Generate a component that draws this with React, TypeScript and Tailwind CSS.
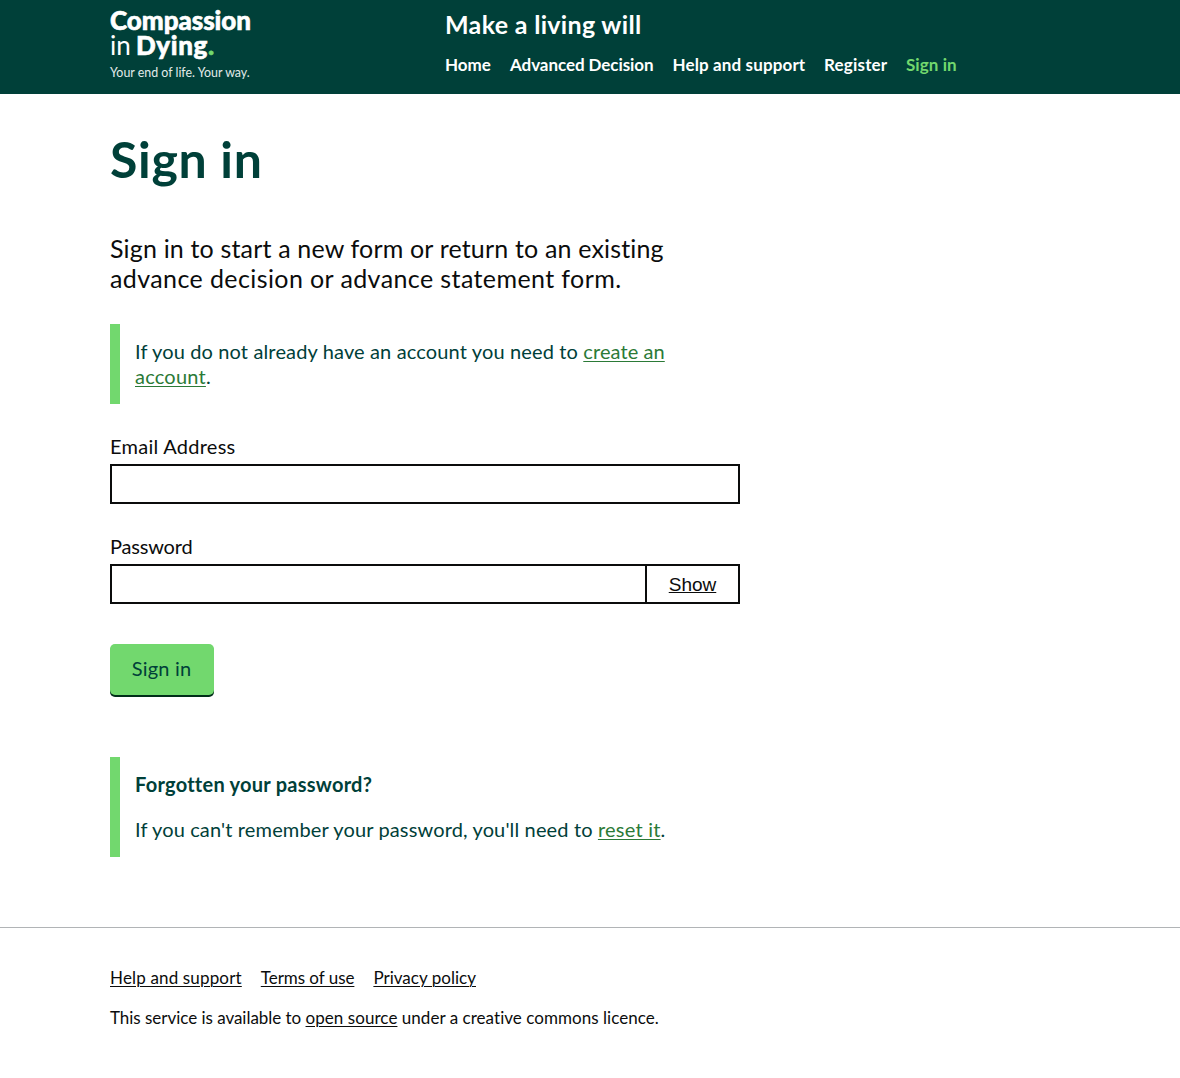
import type { ReactNode } from "react";

const navItems = [
  { label: "Home", style: "w-[65px] text-white" },
  { label: "Advanced Decision", style: "w-[162.5px] tracking-[-0.07px] text-white" },
  { label: "Help and support", style: "w-[151.5px] tracking-[0.13px] text-white" },
  { label: "Register", style: "w-[82px] tracking-[0.19px] text-white" },
  { label: "Sign in", style: "tracking-[0.08px] text-[#72d86e]" },
];

function Link({ className, children }: { className: string; children: ReactNode }) {
  return (
    <a href="#" className={`underline decoration-1 underline-offset-2 ${className}`}>
      {children}
    </a>
  );
}

function Logo() {
  return (
    <a href="#" className="block w-[335px] pt-[7px] text-white">
      <div className="h-[25px] text-[26px] leading-[26px] font-black tracking-[-0.05px] [-webkit-text-stroke:0.6px_white]">
        Compassion
      </div>
      <div className="flex h-[25px] text-[26px] leading-[26px]">
        <span className="w-[26px] font-normal">in</span>
        <span className="font-black tracking-[0.65px] [-webkit-text-stroke:0.6px]">
          Dying<span className="text-[#72d86e]">.</span>
        </span>
      </div>
      <div className="pt-[8px] text-[12.4px] leading-[16px] text-[#e3ebea]">Your end of life. Your way.</div>
    </a>
  );
}

function Header() {
  return (
    <header className="h-[94px] bg-[#004039]">
      <div className="mx-[110px] flex">
        <Logo />
        <div className="pt-[9px] text-white">
          <div className="text-[25px] leading-[30px] font-bold tracking-[0.32px]">Make a living will</div>
          <nav className="mt-[13px] flex text-[17px] leading-[25px] font-bold">
            {navItems.map((item) => (
              <a key={item.label} href="#" className={`whitespace-nowrap ${item.style}`}>
                {item.label}
              </a>
            ))}
          </nav>
        </div>
      </div>
    </header>
  );
}

function Inset({ className, children }: { className: string; children: ReactNode }) {
  return (
    <div className={`border-l-[10px] border-[#72d86e] p-[15px] whitespace-nowrap text-[#004039] ${className}`}>
      {children}
    </div>
  );
}

export default function App() {
  return (
    <div className="min-h-[1078px] bg-white font-['Lato',sans-serif] text-[20px] leading-[25px] text-[#0b0c0c]">
      <Header />
      <main className="ml-[110px] w-[630px] pt-[40px]">
        <h1 className="text-[50px] leading-[50px] font-bold tracking-[0.7px] text-[#004039]">Sign in</h1>
        <p className="mt-[49px] text-[25px] leading-[30px] whitespace-nowrap">
          <span className="block tracking-[0.17px]">Sign in to start a new form or return to an existing</span>
          <span className="block tracking-[0.4px]">advance decision or advance statement form.</span>
        </p>
        <Inset className="mt-[31px] h-[80px]">
          <span className="tracking-[0.14px]">If you do not already have an account you need to </span>
          <Link className="tracking-[0.09px] text-[#2b7a37]">create an</Link>
          <br />
          <Link className="tracking-[0.22px] text-[#2b7a37]">account</Link>.
        </Inset>
        <form>
          <label className="mt-[30px] block tracking-[0.26px]" htmlFor="email">
            Email Address
          </label>
          <input id="email" className="mt-[5px] block h-[40px] w-full border-2 border-[#0b0c0c] px-[5px] outline-none" />
          <label className="mt-[30px] block tracking-[-0.19px]" htmlFor="password">
            Password
          </label>
          <div className="mt-[5px] flex">
            <input
              id="password"
              type="password"
              className="block h-[40px] w-[537px] border-2 border-[#0b0c0c] px-[5px] outline-none"
            />
            <button
              type="button"
              className="h-[40px] flex-1 border-2 border-l-0 border-[#0b0c0c] font-['Liberation_Sans',sans-serif] text-[19px] leading-[25px] underline decoration-1 underline-offset-1"
            >
              Show
            </button>
          </div>
          <button
            type="button"
            className="mt-[40px] block h-[51px] w-[104px] rounded-[5px] bg-[#72d86e] pr-px pb-[2px] tracking-[0.18px] text-[#004039] shadow-[0_2px_0_#002d18]"
          >
            Sign in
          </button>
        </form>
        <Inset className="mt-[62px] h-[100px]">
          <p className="font-bold tracking-[0.25px]">Forgotten your password?</p>
          <p className="mt-[20px]">
            <span className="tracking-[0.14px]">If you can't remember your password, you'll need to </span>
            <Link className="tracking-[0.23px] text-[#2b7a37]">reset it</Link>.
          </p>
        </Inset>
      </main>
      <footer className="mt-[70px] border-t border-[#b1b4b6] px-[110px] pt-[40px] text-[17px] leading-[20px] whitespace-nowrap">
        <div className="flex gap-[19px]">
          <Link className="tracking-[0.16px]">Help and support</Link>
          <Link className="tracking-[-0.04px]">Terms of use</Link>
          <Link className="tracking-[0.02px]">Privacy policy</Link>
        </div>
        <p className="mt-[20px]">
          <span className="tracking-[-0.03px]">This service is available to </span>
          <Link className="tracking-[0.06px]">open source</Link>{" "}
          <span className="tracking-[0.04px]">under a creative commons licence.</span>
        </p>
      </footer>
    </div>
  );
}
